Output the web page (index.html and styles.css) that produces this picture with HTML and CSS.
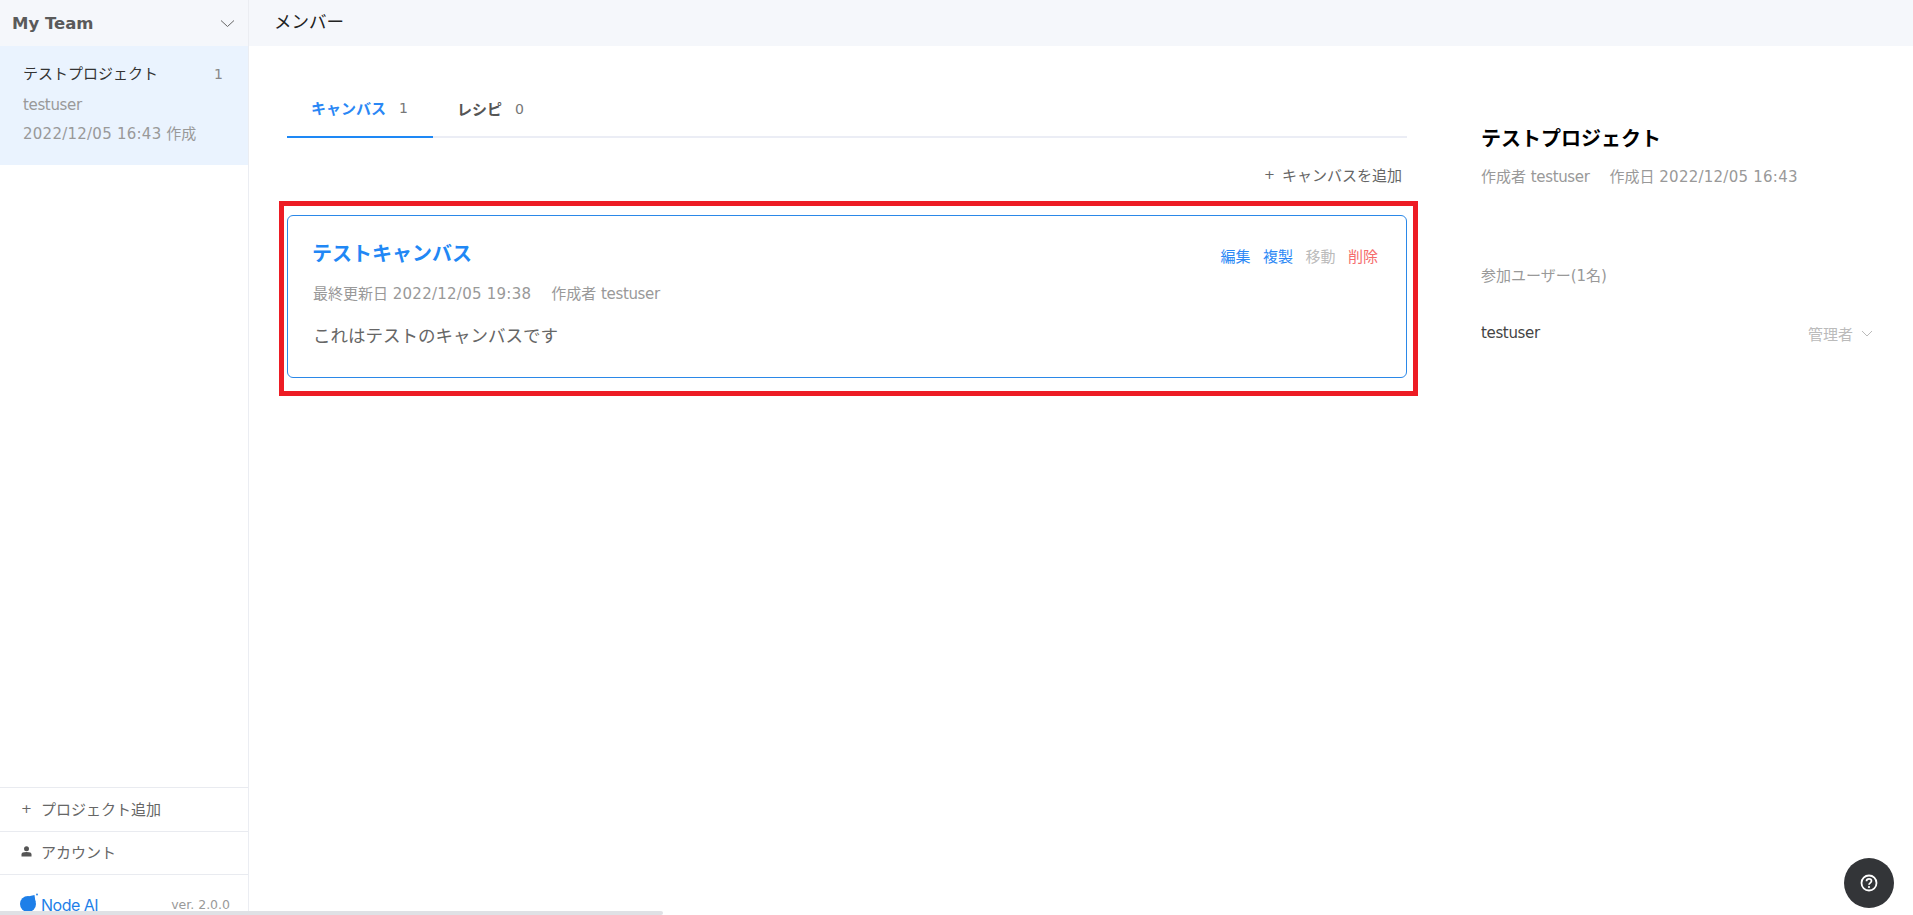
FILE: index.html
```html
<!DOCTYPE html>
<html lang="ja">
<head>
<meta charset="utf-8">
<title>メンバー</title>
<link rel="stylesheet" href="styles.css">
</head>
<body>
<div class="app">
  <aside class="sidebar">
    <div class="team">
      <span class="team-name">My Team</span>
      <svg class="team-chevron" width="15" height="9" viewBox="0 0 15 9"><path d="M1 1.5 7.5 7.5 14 1.5" fill="none" stroke="#666" stroke-width="1"/></svg>
    </div>
    <div class="project">
      <div class="project-top"><span class="project-name">テストプロジェクト</span><span class="project-count">1</span></div>
      <div class="project-meta"><span class="usr">testuser</span></div>
      <div class="project-meta"><span class="num">2022/12/05 16:43</span> 作成</div>
    </div>
    <div class="side-spacer"></div>
    <div class="side-row"><span class="side-icon plus">+</span>プロジェクト追加</div>
    <div class="side-row">
      <svg class="side-icon" width="11" height="11" viewBox="0 0 11 11"><circle cx="5.5" cy="2.8" r="2.5" fill="#555"/><path d="M0.5 10.5V8.4C0.5 6.8 2 6 5.5 6S10.500 6.800 10.500 8.400V10.500Z" fill="#555"/></svg>
      アカウント
    </div>
    <div class="side-foot">
      <span class="logo">
        <svg width="20" height="19" viewBox="0 0 20 19"><circle cx="8" cy="11" r="8" fill="#1e7fe8"/><path d="M9 3.200 14.500 2 15.500 9Z" fill="#1e7fe8"/><circle cx="17" cy="1.500" r="0.900" fill="#1e7fe8"/></svg>
        <span class="logo-text">Node AI</span>
      </span>
      <span class="version">ver. 2.0.0</span>
    </div>
  </aside>
  <div class="main">
    <header class="topbar">メンバー</header>
    <div class="body">
      <section class="content">
        <nav class="tabs">
          <div class="tab active"><b>キャンバス</b><span class="tab-count">1</span></div>
          <div class="tab"><b>レシピ</b><span class="tab-count">0</span></div>
        </nav>
        <div class="add-row"><span class="add-plus">+</span>キャンバスを追加</div>
        <div class="highlight">
          <article class="card">
            <div class="card-head">
              <h2 class="card-title">テストキャンバス</h2>
              <div class="card-actions">
                <span class="act-blue">編集</span><span class="act-blue">複製</span><span class="act-grey">移動</span><span class="act-red">削除</span>
              </div>
            </div>
            <div class="card-meta"><span>最終更新日 <span class="num">2022/12/05 19:38</span></span><span>作成者 <span class="usr">testuser</span></span></div>
            <p class="card-desc">これはテストのキャンバスです</p>
          </article>
        </div>
      </section>
      <aside class="info">
        <h1 class="info-title">テストプロジェクト</h1>
        <div class="info-meta"><span>作成者 <span class="usr">testuser</span></span><span>作成日 <span class="num">2022/12/05 16:43</span></span></div>
        <div class="info-users">参加ユーザー(1名)</div>
        <div class="user-row">
          <span class="user-name usr">testuser</span>
          <span class="user-role">管理者
            <svg width="12" height="7" viewBox="0 0 12 7"><path d="M1 1 6 6 11 1" fill="none" stroke="#bbb" stroke-width="1"/></svg>
          </span>
        </div>
      </aside>
    </div>
  </div>
</div>
<div class="scrollbar"></div>
<button class="help" type="button" aria-label="help">
  <svg width="18" height="18" viewBox="0 0 18 18"><circle cx="9" cy="9" r="7.500" fill="none" stroke="#fff" stroke-width="1.800"/><path d="M6.500 7.300C6.500 5.700 7.700 4.900 9 4.900S11.500 5.800 11.500 7.100C11.500 8.800 9 8.900 9 10.800" fill="none" stroke="#fff" stroke-width="1.700"/><circle cx="9" cy="13" r="1.100" fill="#fff"/></svg>
</button>
</body>
</html>
```
FILE: styles.css
```css
* { box-sizing: border-box; }
html, body { margin: 0; height: 100%; }
body {
  font-family: "DejaVu Sans", "Noto Sans CJK JP", sans-serif;
  font-size: 15px;
  color: #555;
  background: #fff;
  overflow: hidden;
}
.num { letter-spacing: 0.25px; }
.usr { letter-spacing: -0.35px; }
.app { display: flex; height: 915px; }
.sidebar {
  width: 249px;
  flex: none;
  display: flex;
  flex-direction: column;
  border-right: 1px solid #ebedf2;
}
.team {
  height: 46px;
  flex: none;
  background: #f5f7fb;
  padding: 0 13px 0 12px;
  display: flex;
  align-items: center;
  justify-content: space-between;
}
.team-name { font-size: 16.500px; font-weight: 700; color: #5a5a5a; padding-top: 1px; }
.project {
  height: 119px;
  flex: none;
  background: #eaf3fe;
  padding: 16px 25px 0 23px;
}
.project-top { display: flex; justify-content: space-between; height: 29px; line-height: 24px; }
.project-name { color: #333; }
.project-count { color: #888; font-size: 14px; }
.project-meta { color: #999; height: 29px; line-height: 29px; font-size: 15px; }
.side-spacer { flex: 1; }
.side-row {
  height: 43.500px;
  flex: none;
  border-top: 1px solid #e9ebf0;
  display: flex;
  align-items: center;
  padding: 0 0 2px 21px;
  color: #666;
}
.side-icon { width: 11px; margin-right: 9px; flex: none; }
.plus { font-size: 13px; text-align: center; }
.side-foot {
  height: 41px;
  flex: none;
  border-top: 1px solid #e9ebf0;
  display: flex;
  justify-content: space-between;
  align-items: flex-end;
  padding: 0 18px 0 20px;
}
.logo { display: flex; align-items: flex-end; padding-bottom: 3px; }
.logo-text { color: #1e7fe8; font-size: 16px; margin: 0 0 -2px 1px; line-height: 18px; font-family: "Inter", sans-serif; letter-spacing: -0.500px; }
.version { color: #999; font-size: 12.500px; line-height: 18px; padding-bottom: 1px; }
.main { flex: 1; display: flex; flex-direction: column; min-width: 0; }
.topbar {
  height: 46px;
  flex: none;
  background: #f5f7fb;
  padding-left: 25px;
  font-size: 17.500px;
  line-height: 44px;
  color: #222;
}
.body { flex: 1; display: flex; padding: 38px 0 0 38px; }
.content { width: 1120px; flex: none; }
.tabs { display: flex; height: 54px; border-bottom: 2px solid #ebedf5; }
.tab {
  height: 54px;
  display: flex;
  align-items: center;
  padding: 0 24px 6px;
  color: #555;
}
.tab b { font-weight: 700; }
.tab.active { border-bottom: 2px solid #1e88f5; width: 146px; }
.tab.active b { color: #2a87f5; }
.tab-count { margin: 2px 0 0 13px; font-size: 14px; color: #777; }
.add-row {
  height: 63px;
  padding: 10px 5px 0 0;
  display: flex;
  justify-content: flex-end;
  align-items: center;
  color: #666;
}
.add-plus { margin-right: 7px; font-size: 13px; }
.highlight {
  margin: 0 -11px 0 -8px;
  padding: 9px 6px 13px 3px;
  border: 5px solid #ed1c24;
  height: 195px;
}
.card {
  height: 163px;
  border: 1px solid #2b88e8;
  border-radius: 6px;
  padding: 25px 28px 0 24px;
}
.card-head { display: flex; justify-content: space-between; align-items: flex-start; height: 40px; }
.card-title { margin: 0; font-size: 20px; font-weight: 700; line-height: 26px; color: #2187f5; }
.card-actions { display: flex; gap: 12.500px; padding-top: 6px; line-height: 20px; }
.act-blue { color: #2c88f5; }
.act-grey { color: #bbb; }
.act-red { color: #f56c6c; }
.card-meta { display: flex; gap: 20px; color: #999; line-height: 24px; height: 30px; padding: 1px 0 0 1px; }
.card-desc { margin: 0; font-size: 17.500px; line-height: 30px; color: #666; padding: 10px 0 0 1px; }
.info { flex: 1; padding: 0 40px 0 74px; }
.info-title { margin: 0; padding-top: 40px; font-size: 20px; line-height: 30px; font-weight: 700; color: #000; }
.info-meta { display: flex; gap: 20px; color: #999; margin-top: 12px; line-height: 22px; }
.info-users { color: #999; margin-top: 76px; line-height: 24px; }
.user-row { display: flex; justify-content: space-between; align-items: center; margin-top: 33px; height: 24px; }
.user-name { color: #444; }
.user-role { color: #bbb; display: flex; align-items: center; gap: 8px; }
.scrollbar {
  position: fixed;
  left: 0;
  bottom: 0;
  width: 663px;
  height: 4px;
  background: #dfe1e5;
  border-radius: 0 2px 2px 0;
}
.help {
  position: fixed;
  right: 19px;
  bottom: 7px;
  width: 50px;
  height: 50px;
  border: 0;
  border-radius: 50%;
  background: #333538;
  display: flex;
  align-items: center;
  justify-content: center;
  padding: 0;
}
```
